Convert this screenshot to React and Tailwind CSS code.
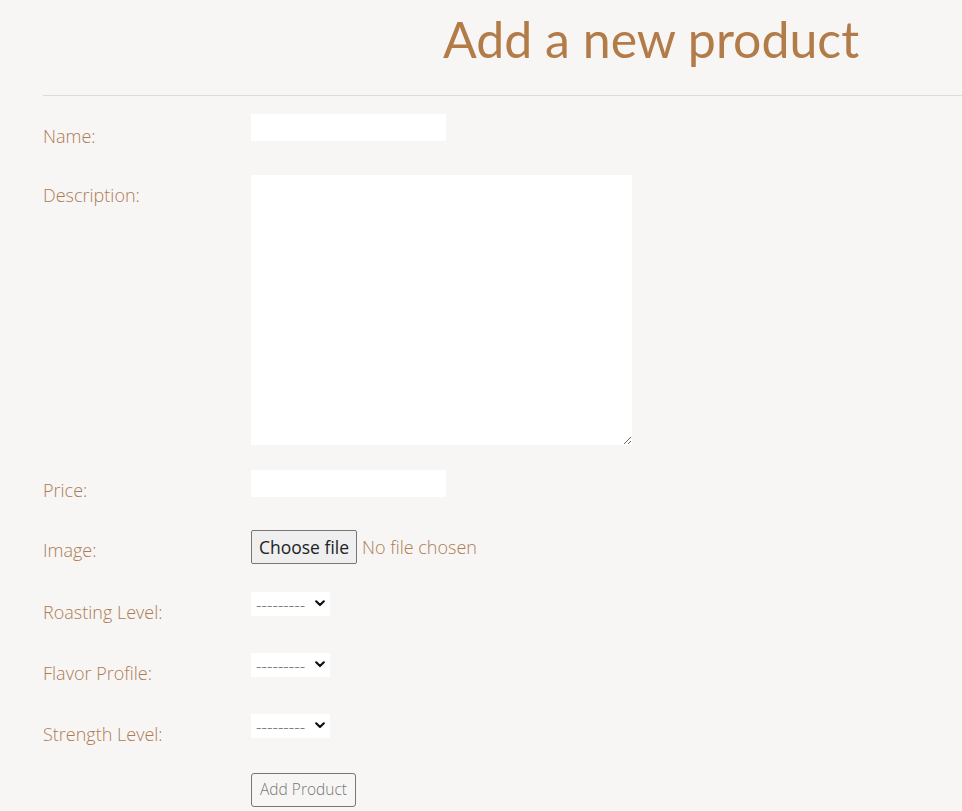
import React, { useState } from 'react'

const Row = ({ label, h, pt = "pt-[8px]", children }) => (
  <div className={`flex items-start ${h}`}>
    <label className={`w-[208px] shrink-0 ${pt} leading-[24px] text-[18px] font-light text-[#ad7c55]`}>{label}</label>
    <div>{children}</div>
  </div>
)

const Select = () => (
  <div className="relative w-[79px] h-[24px]">
    <select className="appearance-none w-full h-full bg-white pl-[5px] text-[17px] font-light text-[#666] outline-none" defaultValue="">
      <option value="">---------</option>
    </select>
    <svg className="absolute right-[5px] top-[8px] pointer-events-none" width="10" height="7" viewBox="0 0 10 7">
      <path d="M1.2 1.3 L5 5 L8.8 1.3" fill="none" stroke="#111" strokeWidth="2.2" strokeLinecap="round" strokeLinejoin="round" />
    </svg>
  </div>
)

export default function App() {
  const [fileName, setFileName] = useState('')
  return (
    <div className="min-h-screen bg-[#f7f6f4] overflow-hidden" style={{ fontFamily: '"Open Sans", sans-serif' }}>
      <div className="ml-[43px]">
        <div className="pt-[14px] pb-[31px] pl-[400px]">
          <h1 className="text-[50px] leading-[50px] font-normal text-[#b27b48] whitespace-nowrap" style={{ fontFamily: 'Lato, sans-serif' }}>
            Add a new product
          </h1>
        </div>
        <hr className="border-0 h-px bg-[#dcdcdc]" />

        <form className="pt-[18px]">
          <Row label="Name:" h="h-[61px]" pt="pt-[10px]">
            <input type="text" className="w-[195px] h-[27px] bg-white outline-none px-1" />
          </Row>
          <Row label="Description:" h="h-[295px]">
            <textarea className="block w-[381px] h-[270px] bg-white outline-none p-1" />
          </Row>
          <Row label="Price:" h="h-[60px]">
            <input type="number" className="w-[195px] h-[27px] bg-white outline-none px-1" />
          </Row>
          <Row label="Image:" h="h-[62px]">
            <label className="flex items-center cursor-pointer">
              <input type="file" className="hidden" onChange={(e) => setFileName(e.target.files?.[0]?.name || '')} />
              <span className="h-[34px] w-[106px] flex items-center justify-center bg-[#efefef] border border-[#767676] rounded-[2px] text-[17.5px] text-[#222]">
                Choose file
              </span>
              <span className="ml-[5px] text-[18px] font-light text-[#ad7c55]">{fileName || 'No file chosen'}</span>
            </label>
          </Row>
          <Row label="Roasting Level:" h="h-[61px]">
            <Select />
          </Row>
          <Row label="Flavor Profile:" h="h-[61px]">
            <Select />
          </Row>
          <Row label="Strength Level:" h="h-[59px]">
            <Select />
          </Row>
          <div className="flex pb-[10px]">
            <div className="w-[208px] shrink-0" />
            <button type="button" className="h-[34px] w-[105px] border border-[#767676] rounded-[3px] text-[15.5px] font-light text-[#777]">
              Add Product
            </button>
          </div>
        </form>
      </div>
    </div>
  )
}
